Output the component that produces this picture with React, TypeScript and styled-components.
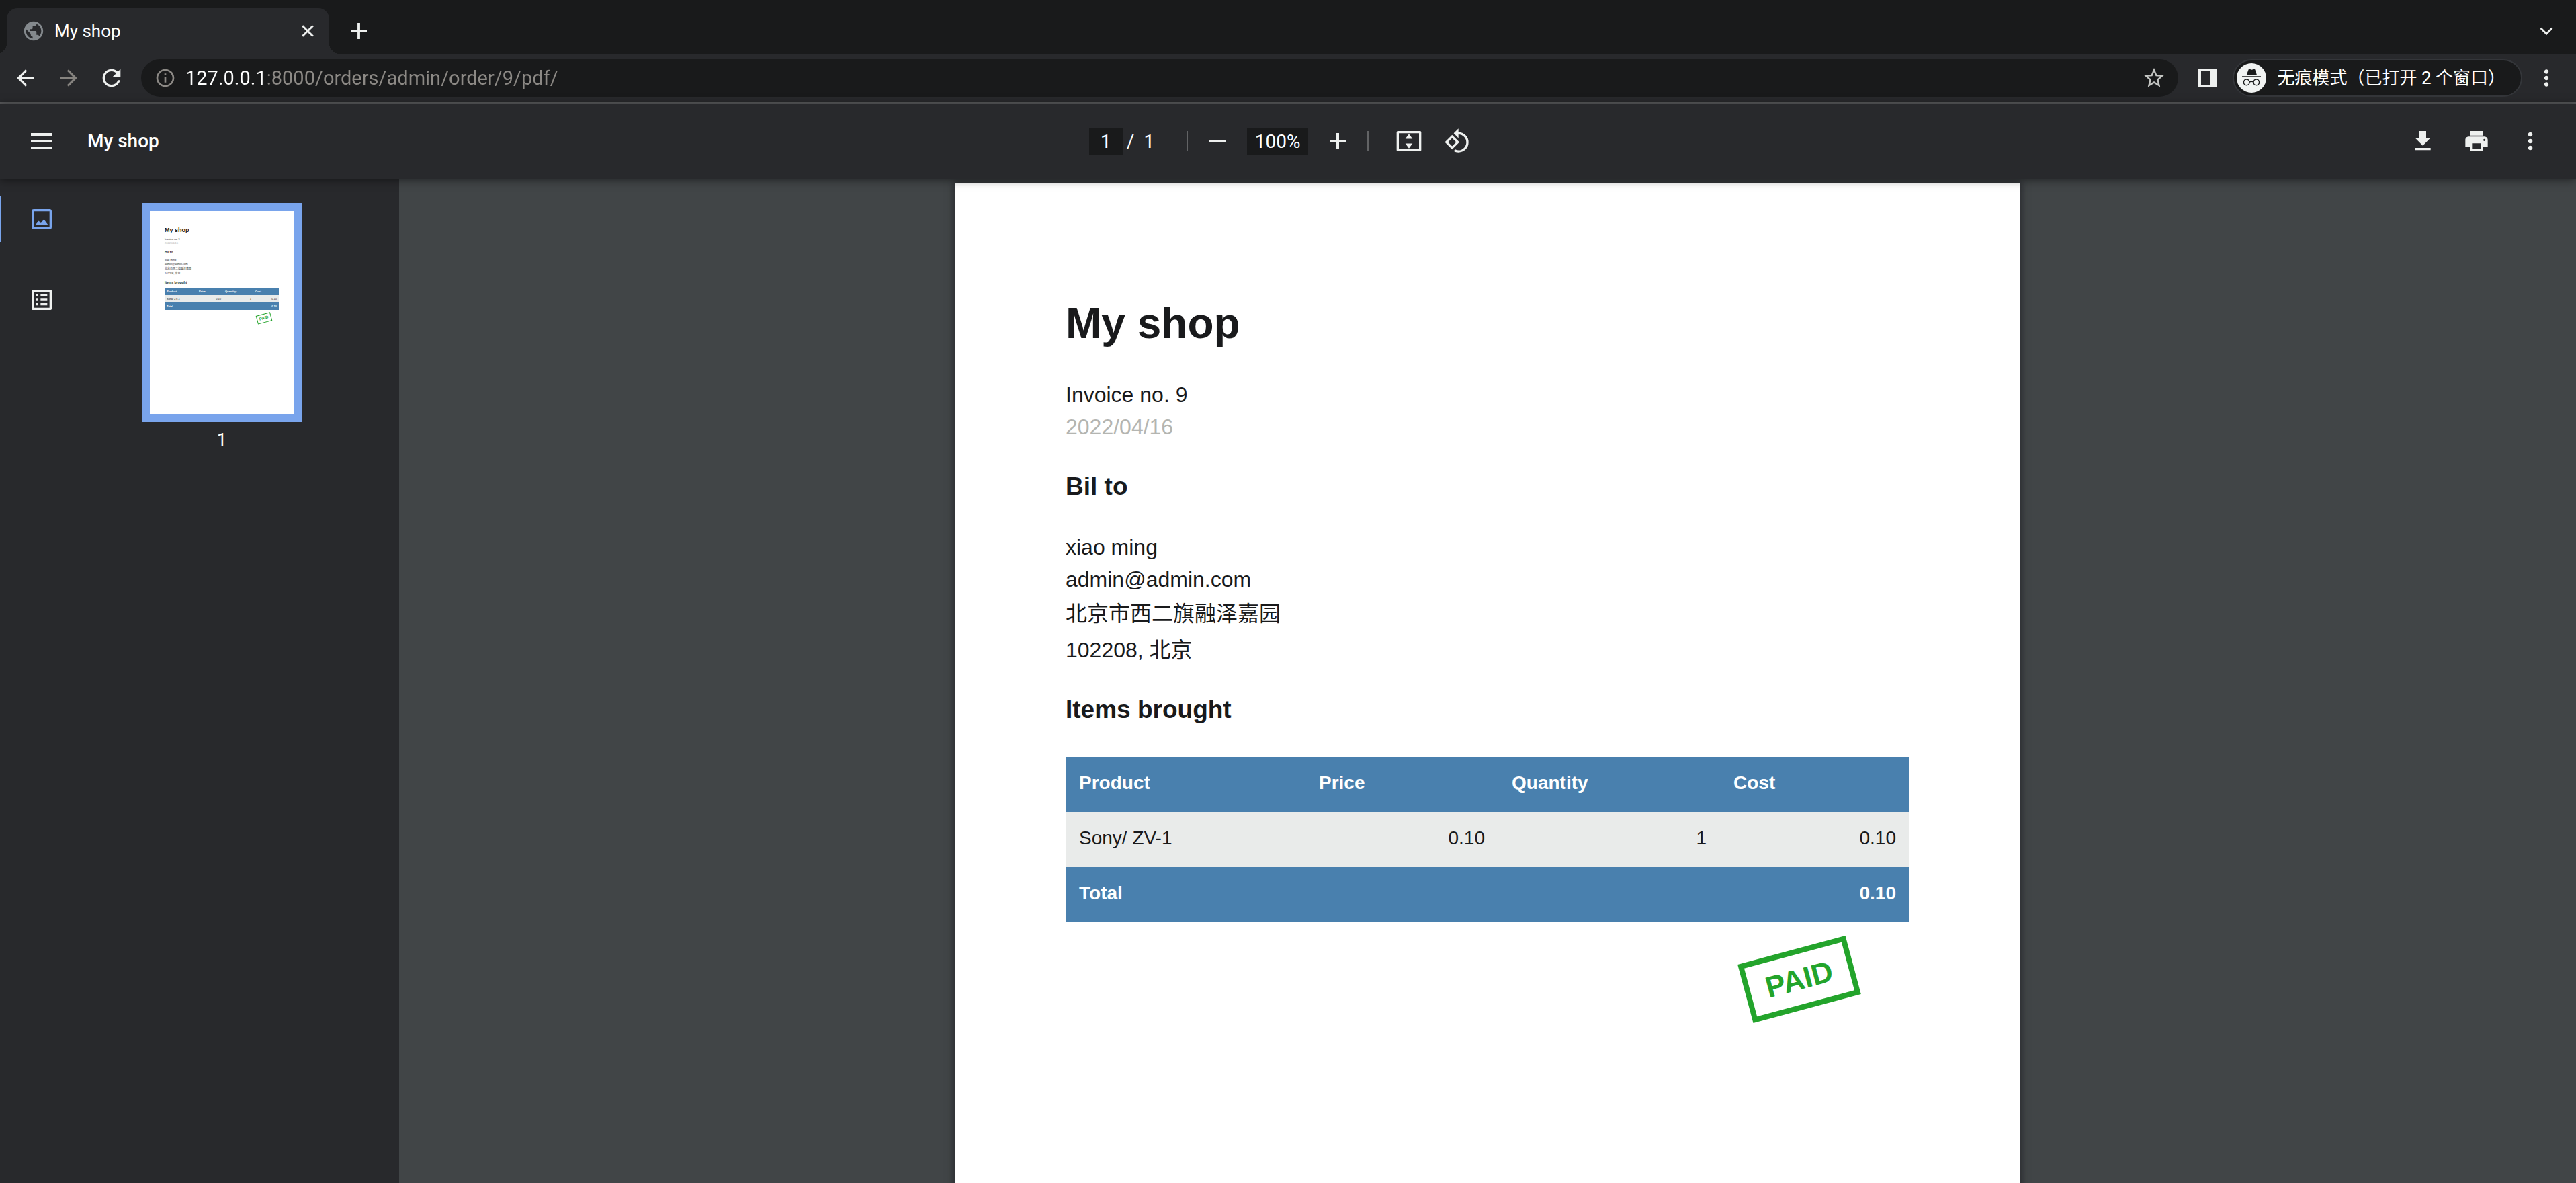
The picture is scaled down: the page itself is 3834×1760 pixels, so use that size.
import React from "react";
import styled, { createGlobalStyle, ThemeProvider, css } from "styled-components";
import {
  MdPublic, MdArrowBack, MdArrowForward, MdRefresh, MdInfoOutline, MdStarBorder,
  MdMoreVert, MdGetApp, MdPrint, MdRotate90DegreesCcw, MdListAlt,
} from "react-icons/md";

const UI_FONT = `Roboto, "Noto Sans CJK SC", sans-serif`;
const DOC_FONT = `"Liberation Sans", "Noto Sans CJK SC", Arial, sans-serif`;

const Global = createGlobalStyle`
  * { box-sizing: border-box; }
  body { margin: 0; background: #414547; font-family: ${UI_FONT}; color: #fff; overflow: hidden; }
  button, input { font: inherit; color: inherit; border: 0; padding: 0; margin: 0; background: none; }
  h1, h2, h3, p { margin: 0; }
  svg { display: block; flex: none; }
`;

const Window = styled.div`
  display: flex;
  flex-direction: column;
  height: 100vh;
`;

/* ---------- browser frame ---------- */

const TabStrip = styled.div`
  display: flex;
  align-items: flex-end;
  height: 80px;
  padding: 0 24px 0 10px;
  background: #191a1b;
`;

const Tab = styled.div`
  position: relative;
  display: flex;
  align-items: center;
  width: 480px;
  height: 68px;
  padding: 0 20px 0 23px;
  background: #28292c;
  border-radius: 16px 16px 0 0;
  &::before, &::after {
    content: "";
    position: absolute;
    bottom: 0;
    width: 16px;
    height: 16px;
  }
  &::before { left: -16px; background: radial-gradient(circle at 0 0, transparent 16px, #28292c 16px); }
  &::after { right: -16px; background: radial-gradient(circle at 100% 0, transparent 16px, #28292c 16px); }
`;

const TabTitle = styled.span`
  flex: 1;
  margin-left: 14px;
  font-size: 26px;
  line-height: 32px;
`;

const IconButton = styled.button<{ $size: number; $color?: string }>`
  display: grid;
  place-items: center;
  flex: none;
  width: ${(p) => p.$size}px;
  height: ${(p) => p.$size}px;
  border-radius: 50%;
  color: ${(p) => p.$color || "#eef0ef"};
`;

const NewTab = styled.div`
  margin: 0 auto 10px 20px;
`;

const TabSearch = styled.div`
  margin-bottom: 14px;
`;

const NavBar = styled.div`
  display: flex;
  align-items: center;
  height: 74px;
  padding: 0 20px 0 14px;
  background: #28292c;
  border-bottom: 2px solid #58595b;
`;

const NavButtons = styled.div`
  display: flex;
  gap: 16px;
  margin-right: 20px;
`;

const Omnibox = styled.div`
  display: flex;
  align-items: center;
  flex: 1;
  height: 56px;
  padding: 0 12px;
  border-radius: 28px;
  background: #191a1b;
`;

const Address = styled.input`
  flex: 1;
  min-width: 0;
  height: 40px;
  margin-left: 6px;
  font-size: 29px;
  color: #fff;
  outline: none;
  background: linear-gradient(90deg, #fff 121px, #8c8985 121px);
  background-clip: text;
  -webkit-background-clip: text;
  -webkit-text-fill-color: transparent;
`;

const SidePanelSlot = styled.div`
  margin: 0 13px 0 20px;
`;

const Profile = styled.button`
  display: flex;
  align-items: center;
  gap: 16px;
  height: 56px;
  padding: 0 23px 0 4px;
  border: 2px solid #34363a;
  border-radius: 28px;
  background: #191a1b;
  font-size: 26px;
  line-height: 40px;
  white-space: nowrap;
`;

const MenuSlot = styled.div`
  margin-left: 12px;
`;

/* ---------- viewer toolbar ---------- */

const ViewerBar = styled.header`
  position: relative;
  z-index: 1;
  display: grid;
  grid-template-columns: 1fr auto 1fr;
  align-items: center;
  height: 112px;
  padding: 0 36px 0 30px;
  background: #28292c;
  box-shadow: 0 2px 12px rgba(0, 0, 0, 0.5);
`;

const BarStart = styled.div`
  display: flex;
  align-items: center;
  gap: 36px;
`;

const BarTitle = styled.h1`
  font-size: 28px;
  font-weight: 500;
  line-height: 40px;
`;

const BarCenter = styled.div`
  display: flex;
  align-items: center;
  padding-right: 6px;
  font-size: 28px;
`;

const BarEnd = styled.div`
  display: flex;
  justify-content: flex-end;
  gap: 16px;
`;

const BarInput = styled.input<{ $width: number }>`
  width: ${(p) => p.$width}px;
  height: 40px;
  background: #191a1b;
  text-align: center;
  outline: none;
`;

const PageCount = styled.span`
  display: flex;
  gap: 14px;
  margin: 0 48px 0 6px;
`;

const Divider = styled.span`
  width: 2px;
  height: 30px;
  background: #626365;
`;

const ZoomGroup = styled.div`
  display: flex;
  align-items: center;
  gap: 12px;
  margin: 0 12px;
`;

const ViewGroup = styled.div`
  display: flex;
  gap: 8px;
  margin-left: 28px;
`;

/* ---------- viewer body ---------- */

const Body = styled.div`
  display: flex;
  flex: 1;
  min-height: 0;
`;

const Sidebar = styled.aside`
  display: flex;
  width: 594px;
  background: #28292c;
`;

const SideTabs = styled.nav`
  display: flex;
  flex-direction: column;
  gap: 52px;
  padding-top: 26px;
`;

const SideTab = styled.button<{ $active?: boolean }>`
  display: flex;
  align-items: center;
  width: 124px;
  height: 68px;
  padding-left: 40px;
  border-left: 2px solid transparent;
  color: #eef0ef;
  ${(p) => p.$active && css`
    color: #79a4ec;
    border-left-color: #79a4ec;
  `}
`;

const Thumbs = styled.div`
  display: flex;
  flex-direction: column;
  align-items: center;
  flex: 1;
  padding: 36px 58px 0 0;
`;

const Thumb = styled.div`
  width: 238px;
  height: 326px;
  border: 12px solid #79a4ec;
  background: #fff;
`;

const ThumbLabel = styled.span`
  margin-top: 8px;
  font-size: 26px;
  line-height: 36px;
`;

const Canvas = styled.main`
  display: flex;
  justify-content: center;
  align-items: flex-start;
  flex: 1;
  padding-top: 6px;
  overflow: hidden;
  background: #414547;
`;

const Paper = styled.div`
  width: 1586px;
  min-height: 2244px;
  background: #fff;
  box-shadow: 0 0 10px 2px rgba(25, 25, 30, 0.6);
`;

/* ---------- invoice ---------- */

const fullSize = {
  padTop: 161, padSide: 165,
  h1: 64, h1Line: 96, h1Gap: 34,
  text: 32, line: 48, cjkLine: 54,
  h2: 37, h2Line: 56, h2Before: 37, h2After: 38, itemsBefore: 34, itemsAfter: 42,
  cell: 28, cellLine: 42, cellTop: 18, cellBottom: 22, cellSide: 20,
  cols: [357, 287, 330, 282],
  stamp: 44, stampLine: 66, stampPadY: 4, stampPadX: 24, stampBorder: 8, stampTop: 40, stampRight: 81,
};

const thumbSize: typeof fullSize = {
  padTop: 22, padSide: 22,
  h1: 9, h1Line: 13, h1Gap: 4,
  text: 4, line: 6, cjkLine: 7,
  h2: 5, h2Line: 8, h2Before: 6, h2After: 5, itemsBefore: 6, itemsAfter: 4,
  cell: 4, cellLine: 5, cellTop: 3, cellBottom: 3, cellSide: 3,
  cols: [48, 39, 45, 38],
  stamp: 6, stampLine: 9, stampPadY: 1, stampPadX: 3, stampBorder: 1, stampTop: 6, stampRight: 11,
};

const Sheet = styled.div`
  padding: ${(p) => p.theme.padTop}px ${(p) => p.theme.padSide}px 0;
  font-family: ${DOC_FONT};
  font-size: ${(p) => p.theme.text}px;
  line-height: ${(p) => p.theme.line}px;
  color: #191a1c;
`;

const ShopName = styled.h1`
  margin-bottom: ${(p) => p.theme.h1Gap}px;
  font-size: ${(p) => p.theme.h1}px;
  line-height: ${(p) => p.theme.h1Line}px;
`;

const Line = styled.p<{ $muted?: boolean; $cjk?: boolean }>`
  color: ${(p) => (p.$muted ? "#b4b5b1" : "inherit")};
  ${(p) => p.$cjk && css`line-height: ${p.theme.cjkLine}px;`}
`;

const Heading = styled.h2<{ $items?: boolean }>`
  margin-top: ${(p) => (p.$items ? p.theme.itemsBefore : p.theme.h2Before)}px;
  margin-bottom: ${(p) => (p.$items ? p.theme.itemsAfter : p.theme.h2After)}px;
  font-size: ${(p) => p.theme.h2}px;
  line-height: ${(p) => p.theme.h2Line}px;
`;

const Items = styled.table`
  width: 100%;
  table-layout: fixed;
  border-collapse: collapse;
  font-size: ${(p) => p.theme.cell}px;
  line-height: ${(p) => p.theme.cellLine}px;
  th, td {
    padding: ${(p) => `${p.theme.cellTop}px ${p.theme.cellSide}px ${p.theme.cellBottom}px`};
    text-align: left;
  }
  thead, tfoot { background: #4980ae; color: #fff; font-weight: bold; }
  tbody { background: #e9ebea; }
`;

const Col = styled.col<{ $i: number }>`
  width: ${(p) => p.theme.cols[p.$i]}px;
`;

const Num = styled.td`
  && { text-align: right; }
`;

const StampRow = styled.div`
  display: flex;
  justify-content: flex-end;
  padding: ${(p) => `${p.theme.stampTop}px ${p.theme.stampRight}px 0 0`};
`;

const Stamp = styled.span`
  padding: ${(p) => `${p.theme.stampPadY}px ${p.theme.stampPadX}px`};
  border: ${(p) => p.theme.stampBorder}px solid #23a42b;
  color: #23a42b;
  font-size: ${(p) => p.theme.stamp}px;
  font-weight: bold;
  line-height: ${(p) => p.theme.stampLine}px;
  transform: rotate(-15deg);
`;

function Invoice() {
  return (
    <Sheet lang="zh-CN">
      <ShopName>My shop</ShopName>
      <Line>Invoice no. 9</Line>
      <Line $muted>2022/04/16</Line>
      <Heading>Bil to</Heading>
      <Line>xiao ming</Line>
      <Line>admin@admin.com</Line>
      <Line $cjk>北京市西二旗融泽嘉园</Line>
      <Line $cjk>102208, 北京</Line>
      <Heading $items>Items brought</Heading>
      <Items>
        <colgroup>{[0, 1, 2, 3].map((i) => <Col key={i} $i={i} />)}</colgroup>
        <thead>
          <tr><th>Product</th><th>Price</th><th>Quantity</th><th>Cost</th></tr>
        </thead>
        <tbody>
          <tr><td>Sony/ ZV-1</td><Num>0.10</Num><Num>1</Num><Num>0.10</Num></tr>
        </tbody>
        <tfoot>
          <tr><td colSpan={3}>Total</td><Num>0.10</Num></tr>
        </tfoot>
      </Items>
      <StampRow><Stamp>PAID</Stamp></StampRow>
    </Sheet>
  );
}

/* ---------- icons ---------- */

const Stroke = ({ d, size, width }: { d: string; size: number; width: number }) => (
  <svg width={size} height={size} viewBox="0 0 20 20" fill="none" stroke="currentColor" strokeWidth={width}>
    <path d={d} />
  </svg>
);

const SidePanelIcon = () => (
  <svg width="28" height="28" viewBox="0 0 28 28" fill="currentColor">
    <path fillRule="evenodd" d="M0 0h28v28H0zM4 4v20h14V4z" />
  </svg>
);

const FitIcon = () => (
  <svg width="40" height="40" viewBox="0 0 24 24" fill="currentColor">
    <path fillRule="evenodd" d="M2 3h20a1 1 0 0 1 1 1v16a1 1 0 0 1-1 1H2a1 1 0 0 1-1-1V4a1 1 0 0 1 1-1zm1 2v14h18V5z" />
    <path d="M12 5.500l3.200 4.400H8.800zM12 18.500l3.200-4.400H8.800z" />
  </svg>
);

const PictureIcon = () => (
  <svg width="40" height="40" viewBox="0 0 24 24" fill="currentColor">
    <path fillRule="evenodd" d="M5 3h14a2 2 0 0 1 2 2v14a2 2 0 0 1-2 2H5a2 2 0 0 1-2-2V5a2 2 0 0 1 2-2zm0 2v14h14V5z" />
    <path d="M6.600 16.800l2.800-3.300 1.900 2.100 2.700-3.400 3.500 4.600z" />
  </svg>
);

const IncognitoIcon = () => (
  <svg width="44" height="44" viewBox="0 0 44 44">
    <circle cx="22" cy="22" r="22" fill="#f1f3f2" />
    <path fill="#191a1b" d="M17.600 9.600q.4-1.200 1.600-.8l3.300 1 3.300-1q1.200-.4 1.600.8L30 17.600H14.700zM8 19.200h28v1.700H8z" />
    <g fill="none" stroke="#191a1b" strokeWidth="1.500">
      <circle cx="14.700" cy="28.400" r="4.300" />
      <circle cx="29.300" cy="28.400" r="4.300" />
      <path d="M19 28q3-1.600 6 0" />
    </g>
  </svg>
);

export default function App() {
  return (
    <Window>
      <Global />
      <TabStrip>
        <Tab>
          <MdPublic size={34} color="#84898d" />
          <TabTitle>My shop</TabTitle>
          <IconButton $size={24} aria-label="Close tab"><Stroke size={24} width={2.4} d="M3.500 3.500l13 13M16.500 3.500l-13 13" /></IconButton>
        </Tab>
        <NewTab>
          <IconButton $size={48} aria-label="New tab"><Stroke size={32} width={2.4} d="M10 2.500v15M2.500 10h15" /></IconButton>
        </NewTab>
        <TabSearch>
          <IconButton $size={40} aria-label="Search tabs"><Stroke size={24} width={2.4} d="M3 6.500l7 7 7-7" /></IconButton>
        </TabSearch>
      </TabStrip>
      <NavBar>
        <NavButtons>
          <IconButton $size={48} aria-label="Back"><MdArrowBack size={38} /></IconButton>
          <IconButton $size={48} $color="#86837f" aria-label="Forward"><MdArrowForward size={38} /></IconButton>
          <IconButton $size={48} aria-label="Reload"><MdRefresh size={40} /></IconButton>
        </NavButtons>
        <Omnibox>
          <IconButton $size={48} $color="#8c8985" aria-label="Site information"><MdInfoOutline size={32} /></IconButton>
          <Address aria-label="Address" defaultValue="127.0.0.1:8000/orders/admin/order/9/pdf/" />
          <IconButton $size={48} $color="#c4c6c3" aria-label="Bookmark this page"><MdStarBorder size={36} /></IconButton>
        </Omnibox>
        <SidePanelSlot>
          <IconButton $size={48} aria-label="Side panel"><SidePanelIcon /></IconButton>
        </SidePanelSlot>
        <Profile lang="zh-CN"><IncognitoIcon />无痕模式（已打开 2 个窗口）</Profile>
        <MenuSlot>
          <IconButton $size={48} aria-label="Browser menu"><MdMoreVert size={38} /></IconButton>
        </MenuSlot>
      </NavBar>

      <ViewerBar>
        <BarStart>
          <IconButton $size={64} aria-label="Menu"><Stroke size={40} width={2} d="M2 5h16M2 10h16M2 15h16" /></IconButton>
          <BarTitle>My shop</BarTitle>
        </BarStart>
        <BarCenter>
          <BarInput $width={50} aria-label="Page number" defaultValue="1" />
          <PageCount><span>/</span><span>1</span></PageCount>
          <Divider />
          <ZoomGroup>
            <IconButton $size={64} aria-label="Zoom out"><Stroke size={40} width={2} d="M4 10h12" /></IconButton>
            <BarInput $width={91} aria-label="Zoom level" defaultValue="100%" />
            <IconButton $size={64} aria-label="Zoom in"><Stroke size={40} width={2} d="M4 10h12M10 4v12" /></IconButton>
          </ZoomGroup>
          <Divider />
          <ViewGroup>
            <IconButton $size={64} aria-label="Fit to page"><FitIcon /></IconButton>
            <IconButton $size={64} aria-label="Rotate"><MdRotate90DegreesCcw size={40} /></IconButton>
          </ViewGroup>
        </BarCenter>
        <BarEnd>
          <IconButton $size={64} aria-label="Download"><MdGetApp size={40} /></IconButton>
          <IconButton $size={64} aria-label="Print"><MdPrint size={40} /></IconButton>
          <IconButton $size={64} aria-label="More actions"><MdMoreVert size={40} /></IconButton>
        </BarEnd>
      </ViewerBar>

      <Body>
        <Sidebar>
          <SideTabs>
            <SideTab $active aria-label="Thumbnails"><PictureIcon /></SideTab>
            <SideTab aria-label="Document outline"><MdListAlt size={40} /></SideTab>
          </SideTabs>
          <Thumbs>
            <Thumb>
              <ThemeProvider theme={thumbSize}><Invoice /></ThemeProvider>
            </Thumb>
            <ThumbLabel>1</ThumbLabel>
          </Thumbs>
        </Sidebar>
        <Canvas>
          <Paper>
            <ThemeProvider theme={fullSize}><Invoice /></ThemeProvider>
          </Paper>
        </Canvas>
      </Body>
    </Window>
  );
}
